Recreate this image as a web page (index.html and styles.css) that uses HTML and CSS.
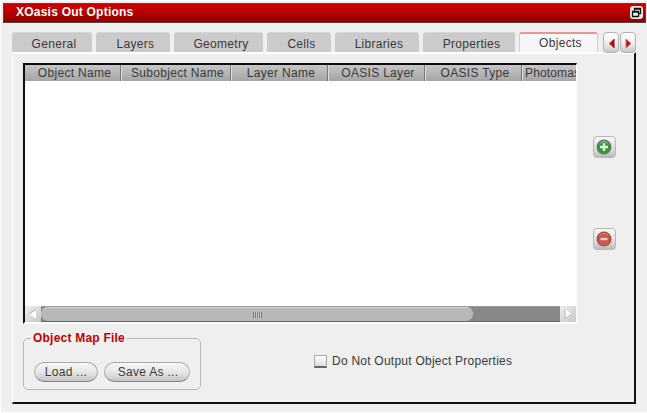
FILE: index.html
```html
<!DOCTYPE html>
<html lang="en">
<head>
<meta charset="utf-8">
<title>XOasis Out Options</title>
<link rel="stylesheet" href="styles.css">
</head>
<body>
<div class="window">
  <header class="titlebar">
    <h1>XOasis Out Options</h1>
    <svg class="restore" width="13" height="13" viewBox="0 0 13 13"><rect width="13" height="13" rx="3" fill="#e9e9e5"/><path d="M4.500 5V2.500h6v5H8.500M4 3h7" fill="none" stroke="#111" stroke-width="1.300"/><path d="M2.500 5.500h6v5h-6zM2 6h7" fill="#f4f4f0" stroke="#111" stroke-width="1.300"/></svg>
  </header>
  <nav class="tabs">
    <div class="tab general"><span>General</span></div>
    <div class="tab layers"><span>Layers</span></div>
    <div class="tab geometry"><span>Geometry</span></div>
    <div class="tab cells"><span>Cells</span></div>
    <div class="tab libraries"><span>Libraries</span></div>
    <div class="tab properties"><span>Properties</span></div>
    <div class="tab objects"><span>Objects</span></div>
    <div class="tab-scroll">
      <button><svg width="16" height="20" viewBox="0 0 16 20"><path d="M11 6v9L6 10.500z" fill="#c00d0d"/><path d="M11 6v9" stroke="#701010"/></svg></button>
      <button><svg width="16" height="20" viewBox="0 0 16 20"><path d="M6 6v9l5-4.500z" fill="#c00d0d"/><path d="M6 6v9" stroke="#e06060"/></svg></button>
    </div>
  </nav>
  <main class="page">
    <div class="upper">
      <section class="table">
        <div class="head">
          <div><span>Object Name</span></div>
          <div><span>Subobject Name</span></div>
          <div><span>Layer Name</span></div>
          <div><span>OASIS Layer</span></div>
          <div><span>OASIS Type</span></div>
          <div class="last"><span>Photomas</span></div>
        </div>
        <div class="rows"></div>
        <div class="scrollbar">
          <svg class="arrow" width="16" height="16" viewBox="0 0 16 16"><path d="M11 3.500v9L4 8z" fill="#fff"/><path d="M11 3.500L4 8" stroke="#aaa"/></svg>
          <div class="track"><div class="thumb"><i></i></div></div>
          <svg class="arrow" width="16" height="16" viewBox="0 0 16 16"><path d="M5 3.500v9L12 8z" fill="#fff"/><path d="M5 3.500v9L12 8" fill="none" stroke="#bbb"/></svg>
        </div>
      </section>
      <div class="actions">
        <button><svg width="23" height="22" viewBox="0 0 23 22"><circle cx="11" cy="11" r="7.500" fill="#6d756d"/><circle cx="11" cy="11.500" r="5.800" fill="#27a32b"/><path d="M6.500 8Q11 3 15.500 8" fill="none" stroke="#a9b5a9"/><path d="M11 7v8M7 11h8" stroke="#e0ece0" stroke-width="2.400"/></svg></button>
        <button><svg width="23" height="22" viewBox="0 0 23 22"><circle cx="11" cy="11" r="7.500" fill="#a34e4b"/><circle cx="11" cy="11.500" r="6" fill="#cc5750"/><path d="M6.500 7.500Q11 3 15.500 7.500" fill="none" stroke="#c99490"/><path d="M7.500 11h7" stroke="#f5d0b5" stroke-width="2.400"/></svg></button>
      </div>
    </div>
    <div class="lower">
      <fieldset>
        <legend><span>Object Map File</span></legend>
        <button class="load"><span>Load ...</span></button>
        <button class="save"><span>Save As ...</span></button>
      </fieldset>
      <label><i class="box"></i><span>Do Not Output Object Properties</span></label>
    </div>
  </main>
</div>
</body>
</html>
```
FILE: styles.css
```css
* { box-sizing: border-box; }
body {
  margin: 0;
  width: 647px;
  height: 413px;
  overflow: hidden;
  background: #fff;
  color: #3a3a3a;
  font: 12px/14px "Liberation Sans", Arial, sans-serif;
  letter-spacing: 0.3px;
}
span { white-space: nowrap; }
button { margin: 0; padding: 0; font: inherit; color: inherit; letter-spacing: inherit; }
button svg { display: block; }
.window { margin: 1px 0 0 1px; padding: 2px 1px 0 2px; height: 411px; background: #efefef; }

.titlebar {
  display: flex;
  justify-content: space-between;
  height: 20px;
  padding: 0 2px 0 12px;
  border: 1px solid #5c4444;
  background: linear-gradient(#cc0000, #c00000 35%, #8c0000);
}
h1 { margin: 1px 0 0; font-size: 12px; line-height: 15px; color: #fff; letter-spacing: 0.23px; }
.restore { margin-top: 2px; }

.tabs { display: flex; gap: 4px; height: 20px; margin: 9px 0 0 9px; }
.tab {
  height: 20px;
  padding-top: 4px;
  text-align: center;
  border-radius: 3px 3px 0 0;
  background: #cbcbcb;
  border-top: 1px solid #d5d5d5;
}
.general { width: 80px; padding-left: 4px; }
.layers { width: 74px; padding-left: 5px; }
.geometry { width: 89px; padding-left: 5px; }
.cells { width: 64px; padding-left: 5px; }
.libraries { width: 84px; padding-left: 4px; }
.properties { width: 92px; padding-left: 5px; }
.objects {
  width: 79px;
  padding: 2px 0 0 4px;
  background: #f6f6f8;
  border: 1px solid #d0d0d0;
  border-top: 2px solid #e19a92;
  border-bottom: 0;
}
.tab-scroll { display: flex; gap: 1px; margin-left: 1px; }
.tab-scroll button {
  width: 16px;
  height: 21px;
  border: 1px solid #b2b2b2;
  border-radius: 4px;
  background: linear-gradient(#fff, #ececec 55%, #c8c8c8);
}
.tab-scroll svg { margin: -1px; }

.page {
  width: 624px;
  height: 352px;
  margin-left: 9px;
  padding: 9px 0 0 10px;
  border: 2px solid #111;
  border-top-color: #fff;
  border-left: 1px solid #fff;
}
.upper { display: flex; height: 261px; }
.table {
  width: 554px;
  height: 261px;
  border: 2px solid #0d0d10;
  border-right: 1px solid #fff;
  border-bottom: 2px solid #fff;
  background: #fff;
}
.head {
  display: grid;
  grid-template-columns: 96px 110px 97px 97px 97px 54px;
  height: 16px;
  overflow: hidden;
  background: linear-gradient(#c6c6c6, #a5a5a5);
}
.head div { text-align: center; border-right: 1px solid #777; box-shadow: 1px 0 #ddd; height: 16px; padding: 1px 0 0 4px; }
.head .last { text-align: left; border: 0; padding-left: 3px; overflow: hidden; letter-spacing: 0.15px; }
.rows { height: 225px; }
.scrollbar { display: flex; height: 16px; border-top: 1px solid #999; border-bottom: 1px solid #666; background: #888; }
.arrow { margin-top: -1px; background: linear-gradient(135deg, #eee, #c8c8c8); }
.track { flex: 1; height: 14px; }
.thumb {
  display: grid;
  place-items: center;
  width: 432px;
  height: 14px;
  border-radius: 7px;
  background: #b8b8b8;
  border-top: 1px solid #d5d5d5;
}
.thumb i { width: 9px; height: 6px; background: repeating-linear-gradient(90deg, #777 0 1px, #ccc 1px 2px); }

.actions { display: flex; flex-direction: column; gap: 70px; padding: 73px 0 0 16px; }
.actions button {
  width: 23px;
  height: 22px;
  border: 1px solid #b7b7b7;
  border-radius: 4px;
  background: linear-gradient(#f5f5f5, #ddd 60%, #bcbcbc);
}
.actions svg { margin: -1px; }

.lower { display: flex; align-items: flex-start; padding-top: 8px; }
fieldset {
  display: flex;
  gap: 6px;
  width: 178px;
  height: 58px;
  min-width: 0;
  margin: 0;
  padding: 17px 0 0 10px;
  border: 1px solid #b6b6b6;
  border-radius: 5px;
}
legend { height: 13px; padding: 0 2px; margin-left: -3px; line-height: 13px; color: #c40000; font-weight: bold; letter-spacing: 0.22px; }
fieldset button {
  height: 20px;
  border: 1px solid #aaa;
  border-bottom-color: #858585;
  border-radius: 10px;
  background: linear-gradient(#f7f7f7, #e4e4e4 55%, #c4c4c4);
}
.load { width: 64px; }
.save { width: 86px; padding-left: 2px; }
label { display: flex; align-items: center; gap: 5px; height: 14px; margin: 22px 0 0 113px; letter-spacing: 0.24px; }
.box {
  width: 13px;
  height: 13px;
  border: 1px solid #aaa;
  border-bottom: 2px solid #666;
  background: linear-gradient(#fff, #ddd);
}
```
